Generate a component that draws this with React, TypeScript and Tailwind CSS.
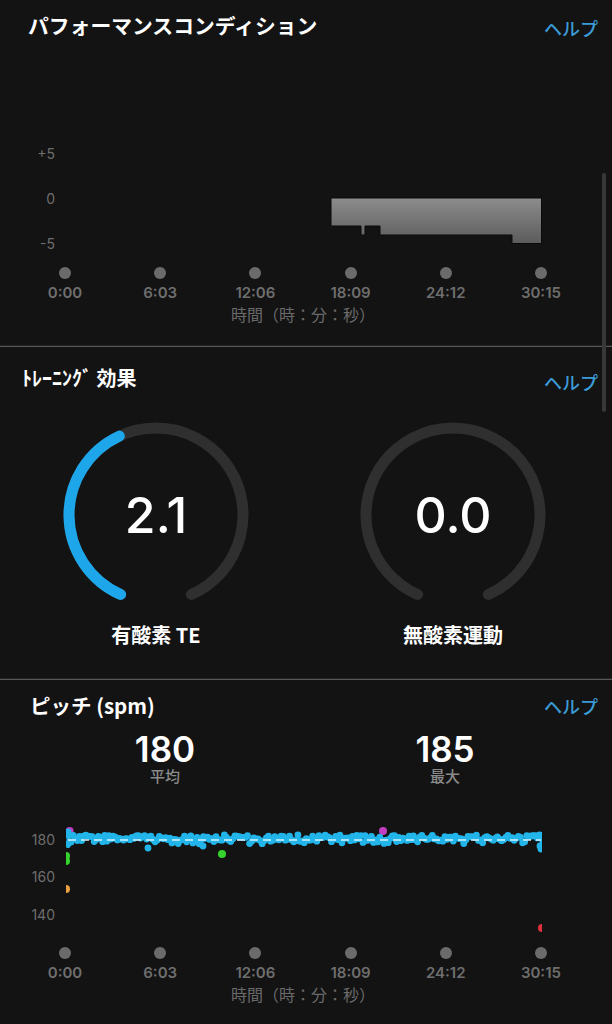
import React from "react";

const FONT = { fontFamily: 'Inter, "Noto Sans CJK JP", sans-serif' };
const CJK = { fontFamily: '"Noto Sans CJK JP", Inter, sans-serif' };

const TIMES = ["0:00", "6:03", "12:06", "18:09", "24:12", "30:15"];

function TimeAxis() {
  return (
    <div>
      <div className="ml-[17.4px] grid grid-cols-[repeat(6,95.2px)]">
        {TIMES.map((t) => (
          <div key={t} className="flex flex-col items-center">
            <div className="h-3 w-3 rounded-full bg-[#6b6b6b]" />
            <div className="mt-[4px] text-[15px] leading-[20px] font-semibold text-[#6e6e6e]" style={FONT}>
              {t}
            </div>
          </div>
        ))}
      </div>
      <div className="text-center text-[16px] leading-[22px] text-[#6a6a6a] pr-[6px]" style={CJK}>
        時間（時：分：秒）
      </div>
    </div>
  );
}

function Header({ title, help, pl, titleClass = "text-[20px]" }: { title: string; help: number; pl: string; titleClass?: string }) {
  return (
    <div className={`flex items-start justify-between pr-[14px] ${pl}`}>
      <div className={`leading-[28px] font-bold text-white ${titleClass}`} style={CJK}>
        {title}
      </div>
      <div className="text-[18px] leading-[28px] font-medium text-[#3b9bd8]" style={{ ...CJK, marginTop: help }}>
        ヘルプ
      </div>
    </div>
  );
}

function pt(cx: number, cy: number, r: number, deg: number) {
  const a = (deg * Math.PI) / 180;
  return [cx + r * Math.sin(a), cy - r * Math.cos(a)];
}
function arc(start: number, end: number) {
  const [x1, y1] = pt(96, 96, 87, start);
  const [x2, y2] = pt(96, 96, 87, end);
  const large = end - start > 180 ? 1 : 0;
  return `M${x1.toFixed(2)},${y1.toFixed(2)} A87,87 0 ${large} 1 ${x2.toFixed(2)},${y2.toFixed(2)}`;
}

function Gauge({ value, label }: { value: number; label: string }) {
  const start = 204;
  const total = 312;
  const end = start + (value / 5) * total;
  return (
    <div className="flex w-[192px] flex-col items-center">
      <div className="relative h-[192px] w-[192px]">
        <svg width="192" height="192" viewBox="0 0 192 192">
          <path d={arc(start, start + total)} stroke="#2f2f2f" strokeWidth="11" fill="none" strokeLinecap="round" />
          {value > 0 && (
            <path d={arc(start, end)} stroke="#1ea6ea" strokeWidth="11" fill="none" strokeLinecap="round" />
          )}
        </svg>
        <div className="absolute inset-0 flex items-center justify-center">
          <span className="text-[50px] font-medium leading-none text-white" style={FONT}>
            {value.toFixed(1)}
          </span>
        </div>
      </div>
      <div className="mt-[11px] text-[20px] leading-[26px] font-semibold text-white" style={CJK}>
        {label}
      </div>
    </div>
  );
}

function rng(seed: number) {
  let s = seed;
  return () => {
    s = (s * 16807) % 2147483647;
    return (s - 1) / 2147483646;
  };
}

function PitchChart() {
  const r = rng(12345);
  const pts: { x: number; y: number }[] = [];
  for (let x = 69; x <= 540; x += 2.1) {
    let y = 52.5 + (r() - 0.5) * 7;
    if (r() < 0.05) y = 56 + r() * 2;
    pts.push({ x, y });
  }
  pts.push({ x: 148, y: 62 }, { x: 203, y: 60 }, { x: 68, y: 46 }, { x: 68, y: 58 }, { x: 540, y: 60 }, { x: 541, y: 63 });
  return (
    <svg width="612" height="161" viewBox="0 0 612 161" className="block">
      <defs>
        <clipPath id="plot">
          <rect x="66" y="0" width="476" height="161" />
        </clipPath>
      </defs>
      <g fill="#6e6e6e" fontSize="14" textAnchor="end" style={FONT}>
        <text x="55" y="59">180</text>
        <text x="55" y="96">160</text>
        <text x="55" y="134">140</text>
      </g>
      <g clipPath="url(#plot)">
        <circle cx="69.6" cy="45" r="4" fill="#c23ec0" />
        <circle cx="383" cy="45" r="4" fill="#c23ec0" />
        <circle cx="66" cy="70" r="4" fill="#36d52d" />
        <circle cx="66" cy="75" r="4" fill="#36d52d" />
        <circle cx="222" cy="68" r="4" fill="#36d52d" />
        <circle cx="66" cy="103" r="4" fill="#e9a040" />
        <circle cx="542" cy="142" r="4" fill="#e0303c" />
        <rect x="66.5" y="45" width="3" height="17" fill="#22b5ea" />
        <rect x="539.5" y="46" width="3" height="17" fill="#22b5ea" />
        {pts.map((p, i) => (
          <circle key={i} cx={p.x} cy={p.y} r="3.4" fill="#22b5ea" />
        ))}
        <line x1="68" y1="54" x2="541" y2="54" stroke="#d7f1fd" strokeWidth="1.5" strokeDasharray="8 5" />
      </g>
    </svg>
  );
}

function ConditionChart() {
  return (
    <svg width="612" height="217" viewBox="0 0 612 217" className="block">
      <defs>
        <linearGradient id="bar" x1="0" y1="148" x2="0" y2="193" gradientUnits="userSpaceOnUse">
          <stop offset="0" stopColor="#8c8c8c" />
          <stop offset="1" stopColor="#5c5c5c" />
        </linearGradient>
      </defs>
      <g fill="#6e6e6e" fontSize="14" textAnchor="end" style={FONT}>
        <text x="55" y="109">+5</text>
        <text x="55" y="154">0</text>
        <text x="55" y="199">-5</text>
      </g>
      <path
        d="M331,148 H541.5 V193.5 H512 V185 H380 V176 H365 V185 H361 V176 H331 Z"
        fill="url(#bar)"
        stroke="#0a0a0a"
        strokeWidth="1"
      />
    </svg>
  );
}

function Divider() {
  return (
    <div>
      <div className="h-px bg-[#242424]" />
      <div className="h-px bg-[#575757]" />
    </div>
  );
}

export default function App() {
  return (
    <div className="relative h-[1024px] w-[612px] overflow-hidden bg-[#131313]" style={FONT}>
      <section className="h-[345px] pt-[11px]">
        <div className="h-[39px]">
          <Header title="パフォーマンスコンディション" help={3} pl="pl-[28px]" titleClass="text-[20.8px]" />
        </div>
        <ConditionChart />
        <TimeAxis />
      </section>
      <Divider />
      <section className="h-[331px] pt-[17px]">
        <div className="h-[55px]">
          <Header title="ﾄﾚｰﾆﾝｸﾞ 効果" help={4} pl="pl-[22px]" />
        </div>
        <div className="flex gap-[105px] pl-[60px]">
          <Gauge value={2.1} label="有酸素 TE" />
          <Gauge value={0} label="無酸素運動" />
        </div>
      </section>
      <Divider />
      <section className="pt-[11px]">
        <div className="h-[39px]">
          <Header title="ピッチ (spm)" help={1} pl="pl-[30px]" titleClass="text-[20.5px]" />
        </div>
        <div className="flex gap-[160px] pl-[105px]">
          {[
            ["180", "平均"],
            ["185", "最大"],
          ].map(([v, l]) => (
            <div key={l} className="flex w-[120px] flex-col items-center">
              <div className="mt-[3px] text-[35px] leading-[33px] font-semibold text-white" style={FONT}>
                {v}
              </div>
              <div className="text-[15px] leading-[20px] font-medium text-[#8a8a8a]" style={CJK}>
                {l}
              </div>
            </div>
          ))}
        </div>
        <PitchChart />
        <TimeAxis />
      </section>
      <div className="absolute left-[602px] top-[173px] h-[239px] w-[4px] rounded-full bg-[#383838]" />
    </div>
  );
}
